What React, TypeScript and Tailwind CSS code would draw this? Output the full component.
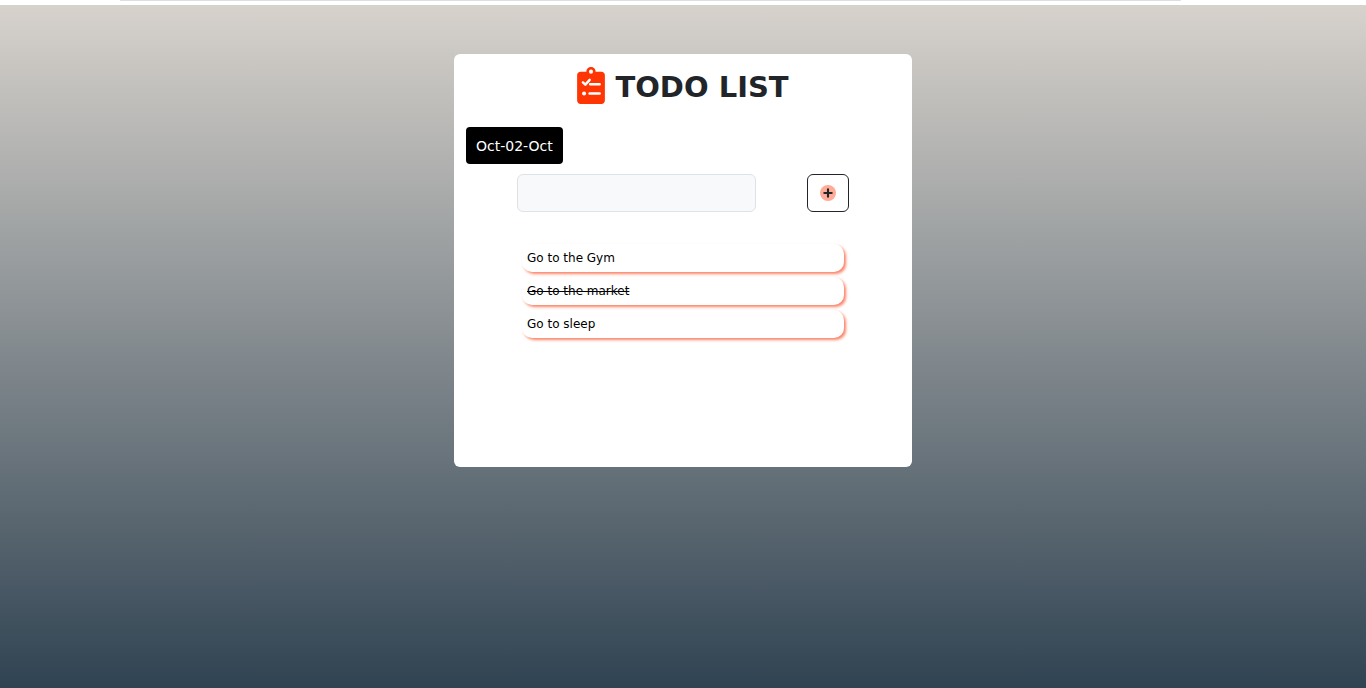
import { useState } from "react";

type Task = { id: number; text: string; done: boolean };

const initialTasks: Task[] = [
  { id: 1, text: "Go to the Gym", done: false },
  { id: 2, text: "Go to the market", done: true },
  { id: 3, text: "Go to sleep", done: false },
];

function ClipboardIcon() {
  return (
    <svg viewBox="0 0 384 512" className="h-[37px] w-7 shrink-0" aria-hidden="true">
      <path
        fill="#ff3503"
        fillRule="evenodd"
        d="M336 64h-80c0-35.300-28.700-64-64-64s-64 28.700-64 64H48C21.500 64 0 85.500 0 112v352c0 26.500 21.500 48 48 48h288c26.500 0 48-21.500 48-48V112c0-26.500-21.500-48-48-48zM192 36a28 28 0 1 1 0 56 28 28 0 0 1 0-56z"
      />
      <path d="M80 212l34 32 60-66" fill="none" stroke="#fff" strokeWidth="34" strokeLinecap="round" strokeLinejoin="round" />
      <path d="M180 240h132M172 366h140" stroke="#fff" strokeWidth="34" strokeLinecap="round" />
      <circle cx="96" cy="366" r="28" fill="#fff" />
    </svg>
  );
}

function PlusIcon() {
  return (
    <svg viewBox="0 0 16 16" className="size-4" aria-hidden="true">
      <circle cx="8" cy="8" r="8" fill="#ffab97" />
      <path d="M8 4.300v7.400M4.300 8h7.400" stroke="#212529" strokeWidth="2.100" strokeLinecap="round" />
    </svg>
  );
}

export default function App() {
  const [tasks, setTasks] = useState<Task[]>(initialTasks);
  const [text, setText] = useState("");

  const addTask = (event: React.FormEvent) => {
    event.preventDefault();
    if (!text.trim()) return;
    setTasks([...tasks, { id: Date.now(), text: text.trim(), done: false }]);
    setText("");
  };

  const toggle = (id: number) =>
    setTasks(tasks.map((task) => (task.id === id ? { ...task, done: !task.done } : task)));

  return (
    <div className="flex min-h-screen flex-col bg-white font-['Verdana','DejaVu_Sans',sans-serif]">
      <div className="h-[5px] pr-[185px] pl-[120px]">
        <div className="h-px rounded-full bg-[#dedede]" />
      </div>
      <main className="flex flex-1 flex-col items-center bg-linear-to-b/srgb from-[#d7d2cc] to-[#304352] px-4 pt-[49px] pb-12">
        <section className="min-h-[413px] w-full max-w-[458px] rounded-md bg-white px-3 pt-[13px]">
          <h1 className="flex items-start justify-center gap-2.5 text-[29px] leading-10 font-bold text-[#212529]">
            <ClipboardIcon />
            TODO LIST
          </h1>
          <time className="mt-5 block w-fit rounded bg-black px-2.5 pt-[9px] pb-[7px] text-sm leading-[21px] text-white">
            Oct-02-Oct
          </time>
          <form onSubmit={addTask} className="mt-2.5 flex justify-evenly">
            <input
              aria-label="New task"
              value={text}
              onChange={(event) => setText(event.target.value)}
              className="h-[38px] w-[239px] rounded-md border border-[#dee2e6] bg-[#f8f9fa] px-3 text-sm text-[#212529]"
            />
            <button
              type="submit"
              aria-label="Add task"
              className="flex h-[38px] w-[42px] items-center justify-center rounded-md border border-[#212529]"
            >
              <PlusIcon />
            </button>
          </form>
          <ul className="mx-14 mt-8 flex flex-col gap-[5px]">
            {tasks.map((task) => (
              <li key={task.id}>
                <button
                  type="button"
                  onClick={() => toggle(task.id)}
                  className={`block w-full rounded-[10px] bg-white px-[5px] py-1 text-left text-xs leading-5 text-black shadow-[2px_2px_3px_#fb8367] ${task.done ? "line-through" : ""}`}
                >
                  {task.text}
                </button>
              </li>
            ))}
          </ul>
        </section>
      </main>
    </div>
  );
}
